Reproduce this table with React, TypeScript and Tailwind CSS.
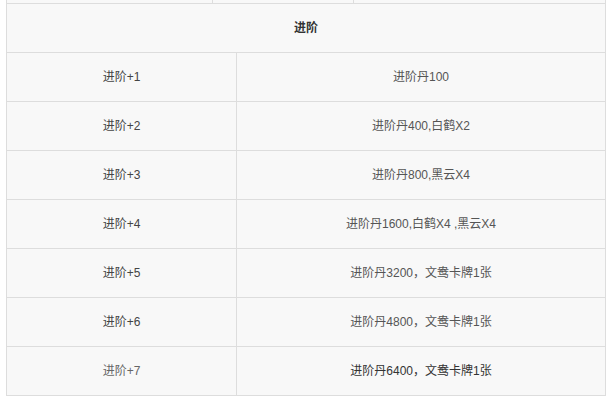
const rows = [
  { level: '进阶+1', cost: '进阶丹100' },
  { level: '进阶+2', cost: '进阶丹400,白鹤X2' },
  { level: '进阶+3', cost: '进阶丹800,黑云X4' },
  { level: '进阶+4', cost: '进阶丹1600,白鹤X4 ,黑云X4' },
  { level: '进阶+5', cost: '进阶丹3200，文鸯卡牌1张' },
  { level: '进阶+6', cost: '进阶丹4800，文鸯卡牌1张' },
  { level: '进阶+7', cost: '进阶丹6400，文鸯卡牌1张' },
]

export default function App() {
  return (
    <div
      className="w-[611px] h-[400px] bg-white text-[12px]"
      style={{ fontFamily: '"Liberation Sans", "Noto Sans CJK SC", sans-serif' }}
    >
      <div className="ml-[6px] w-[600px] border-x border-[#dddddd] bg-[#f8f8f8]">
        {/* tail of the previous row */}
        <div className="flex h-[4px] border-b border-[#dddddd]">
          <div className="w-[206px] border-r border-[#dddddd]"></div>
          <div className="w-[141px] border-r border-[#dddddd]"></div>
          <div className="flex-1"></div>
        </div>

        {/* header */}
        <div className="flex h-[49px] items-center justify-center border-b border-[#dddddd] font-bold text-[#333333]">
          进阶
        </div>

        {rows.map((row, i) => (
          <div key={row.level} className="flex h-[49px] border-b border-[#dddddd]">
            <div
              className={
                i === rows.length - 1
                  ? 'flex w-[230px] items-center justify-center border-r border-[#dddddd] text-[#666666]'
                  : 'flex w-[230px] items-center justify-center border-r border-[#dddddd] text-[#444444]'
              }
            >
              {row.level}
            </div>
            <div
              className={
                i === rows.length - 1
                  ? 'flex flex-1 items-center justify-center text-[#333333]'
                  : 'flex flex-1 items-center justify-center text-[#555555]'
              }
            >
              {row.cost}
            </div>
          </div>
        ))}
      </div>
    </div>
  )
}
